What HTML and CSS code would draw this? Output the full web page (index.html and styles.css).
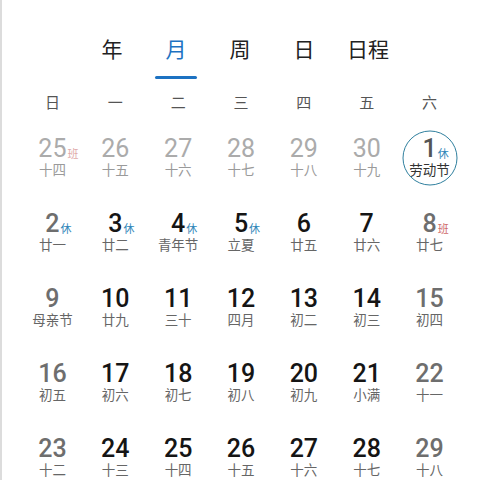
FILE: index.html
```html
<!DOCTYPE html>
<html lang="zh">
<head>
<meta charset="utf-8">
<link rel="stylesheet" href="styles.css">
</head>
<body>
<div class="page">
  <nav class="tabs">
    <div class="tab">年</div>
    <div class="tab active">月</div>
    <div class="tab">周</div>
    <div class="tab">日</div>
    <div class="tab">日程</div>
  </nav>
  <div class="weekdays">
    <div>日</div><div>一</div><div>二</div><div>三</div><div>四</div><div>五</div><div>六</div>
  </div>
  <div class="grid">
    <div class="cell other"><div class="num">25<span class="tag work">班</span></div><div class="lunar">十四</div></div>
    <div class="cell other"><div class="num">26</div><div class="lunar">十五</div></div>
    <div class="cell other"><div class="num">27</div><div class="lunar">十六</div></div>
    <div class="cell other"><div class="num">28</div><div class="lunar">十七</div></div>
    <div class="cell other"><div class="num">29</div><div class="lunar">十八</div></div>
    <div class="cell other"><div class="num">30</div><div class="lunar">十九</div></div>
    <div class="cell weekend today"><div class="num">1<span class="tag rest">休</span></div><div class="lunar fest">劳动节</div></div>

    <div class="cell weekend"><div class="num">2<span class="tag rest">休</span></div><div class="lunar">廿一</div></div>
    <div class="cell"><div class="num">3<span class="tag rest">休</span></div><div class="lunar">廿二</div></div>
    <div class="cell"><div class="num">4<span class="tag rest">休</span></div><div class="lunar">青年节</div></div>
    <div class="cell"><div class="num">5<span class="tag rest">休</span></div><div class="lunar">立夏</div></div>
    <div class="cell"><div class="num">6</div><div class="lunar">廿五</div></div>
    <div class="cell"><div class="num">7</div><div class="lunar">廿六</div></div>
    <div class="cell weekend"><div class="num">8<span class="tag work">班</span></div><div class="lunar">廿七</div></div>

    <div class="cell weekend"><div class="num">9</div><div class="lunar">母亲节</div></div>
    <div class="cell"><div class="num">10</div><div class="lunar">廿九</div></div>
    <div class="cell"><div class="num">11</div><div class="lunar">三十</div></div>
    <div class="cell"><div class="num">12</div><div class="lunar">四月</div></div>
    <div class="cell"><div class="num">13</div><div class="lunar">初二</div></div>
    <div class="cell"><div class="num">14</div><div class="lunar">初三</div></div>
    <div class="cell weekend"><div class="num">15</div><div class="lunar">初四</div></div>

    <div class="cell weekend"><div class="num">16</div><div class="lunar">初五</div></div>
    <div class="cell"><div class="num">17</div><div class="lunar">初六</div></div>
    <div class="cell"><div class="num">18</div><div class="lunar">初七</div></div>
    <div class="cell"><div class="num">19</div><div class="lunar">初八</div></div>
    <div class="cell"><div class="num">20</div><div class="lunar">初九</div></div>
    <div class="cell"><div class="num">21</div><div class="lunar">小满</div></div>
    <div class="cell weekend"><div class="num">22</div><div class="lunar">十一</div></div>

    <div class="cell weekend"><div class="num">23</div><div class="lunar">十二</div></div>
    <div class="cell"><div class="num">24</div><div class="lunar">十三</div></div>
    <div class="cell"><div class="num">25</div><div class="lunar">十四</div></div>
    <div class="cell"><div class="num">26</div><div class="lunar">十五</div></div>
    <div class="cell"><div class="num">27</div><div class="lunar">十六</div></div>
    <div class="cell"><div class="num">28</div><div class="lunar">十七</div></div>
    <div class="cell weekend"><div class="num">29</div><div class="lunar">十八</div></div>
  </div>
</div>
</body>
</html>
```

FILE: styles.css
```css
html, body {
  margin: 0;
  padding: 0;
  background: #fff;
}
body {
  font-family: Roboto, "Noto Sans CJK SC", sans-serif;
  width: 480px;
  height: 480px;
  overflow: hidden;
}
.page {
  height: 480px;
  border-left: 2px solid #dcdcdc;
  box-sizing: border-box;
}
.tabs {
  display: grid;
  grid-template-columns: repeat(5, 64px);
  justify-content: center;
  padding-top: 36px;
  margin-left: -2px;
}
.tab {
  font-size: 21px;
  line-height: 28px;
  text-align: center;
  color: #222;
  padding-bottom: 9px;
  position: relative;
}
.tab.active {
  color: #1d72c2;
}
.tab.active::after {
  content: "";
  position: absolute;
  left: 11px;
  right: 11px;
  bottom: -6px;
  height: 3px;
  border-radius: 2px;
  background: #1d72c2;
}
.weekdays {
  display: grid;
  grid-template-columns: repeat(7, 1fr);
  padding: 0 19px 0 19px;
  margin-top: 20px;
  font-size: 15px;
  line-height: 20px;
  color: #555;
  text-align: center;
}
.grid {
  display: grid;
  grid-template-columns: repeat(7, 1fr);
  grid-auto-rows: 75px;
  padding: 7px 19px 0 19px;
}
.cell {
  display: flex;
  flex-direction: column;
  align-items: center;
  justify-content: center;
  position: relative;
}
.num {
  position: relative;
  font-size: 25px;
  line-height: 26px;
  font-weight: 500;
  color: #151515;
}
.lunar {
  font-size: 13.5px;
  line-height: 16px;
  color: #666;
  margin-bottom: 1px;
}
.tag {
  position: absolute;
  left: 100%;
  bottom: 1px;
  font-size: 11px;
  line-height: 12px;
  font-weight: 400;
  margin-left: 1px;
  white-space: nowrap;
}
.tag.rest { color: #2f86b8; }
.tag.work { color: #cf6a6a; }
.weekend .num { color: #6e6e6e; }
.other .num { color: #ababab; font-weight: 400; }
.other .lunar { color: #9a9a9a; }
.other .tag.work { color: #e0aaaa; }
.today .num { color: #555; }
.today .lunar { color: #333; }
.today::before {
  content: "";
  position: absolute;
  width: 53px;
  height: 53px;
  border: 1.5px solid #2f7f9e;
  border-radius: 50%;
  top: 50%;
  left: 50%;
  transform: translate(-50%, -50%);
}
```
